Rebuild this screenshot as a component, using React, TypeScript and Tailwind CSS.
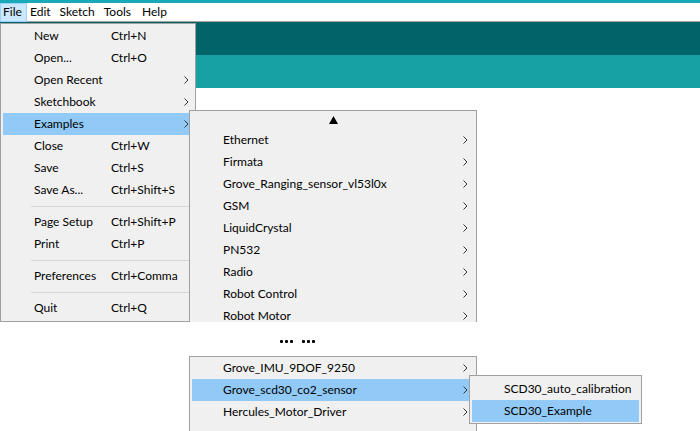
import React from "react";

type Item =
  | { kind: "item"; label: string; shortcut?: string; arrow?: boolean; active?: boolean }
  | { kind: "sep" };

const fileItems: Item[] = [
  { kind: "item", label: "New", shortcut: "Ctrl+N" },
  { kind: "item", label: "Open...", shortcut: "Ctrl+O" },
  { kind: "item", label: "Open Recent", arrow: true },
  { kind: "item", label: "Sketchbook", arrow: true },
  { kind: "item", label: "Examples", arrow: true, active: true },
  { kind: "item", label: "Close", shortcut: "Ctrl+W" },
  { kind: "item", label: "Save", shortcut: "Ctrl+S" },
  { kind: "item", label: "Save As...", shortcut: "Ctrl+Shift+S" },
  { kind: "sep" },
  { kind: "item", label: "Page Setup", shortcut: "Ctrl+Shift+P" },
  { kind: "item", label: "Print", shortcut: "Ctrl+P" },
  { kind: "sep" },
  { kind: "item", label: "Preferences", shortcut: "Ctrl+Comma" },
  { kind: "sep" },
  { kind: "item", label: "Quit", shortcut: "Ctrl+Q" },
];

const examples = [
  "Ethernet",
  "Firmata",
  "Grove_Ranging_sensor_vl53l0x",
  "GSM",
  "LiquidCrystal",
  "PN532",
  "Radio",
  "Robot Control",
  "Robot Motor",
];

const groveItems = [
  { label: "Grove_IMU_9DOF_9250", active: false },
  { label: "Grove_scd30_co2_sensor", active: true },
  { label: "Hercules_Motor_Driver", active: false },
];

function Chevron() {
  return (
    <svg width="5" height="8" viewBox="0 0 5 8" className="shrink-0">
      <path d="M0.5 0.5 L4 4 L0.5 7.5" fill="none" stroke="#333" strokeWidth="1" />
    </svg>
  );
}

function MenuRow({
  label,
  shortcut,
  arrow,
  active,
}: {
  label: string;
  shortcut?: string;
  arrow?: boolean;
  active?: boolean;
}) {
  return (
    <div className={`relative flex h-[22px] items-center pl-[31px] ${active ? "bg-[#91c9f7]" : ""}`}>
      <span className="w-[77px] shrink-0 whitespace-nowrap">{label}</span>
      {shortcut && <span className="whitespace-nowrap">{shortcut}</span>}
      {arrow && (
        <span className="absolute right-[4px] top-[7px]">
          <Chevron />
        </span>
      )}
    </div>
  );
}

function SubRow({ label, active, arrow = true }: { label: string; active?: boolean; arrow?: boolean }) {
  return (
    <div className={`relative mx-[2px] flex h-[22px] items-center pl-[31px] ${active ? "bg-[#91c9f7]" : ""}`}>
      <span className="whitespace-nowrap">{label}</span>
      {arrow && (
        <span className="absolute right-[6px] top-[7px]">
          <Chevron />
        </span>
      )}
    </div>
  );
}

function Dots() {
  return (
    <div className="flex gap-[2px]">
      <div className="size-[3px] rounded-[1px] bg-black" />
      <div className="size-[3px] rounded-[1px] bg-black" />
      <div className="size-[3px] rounded-[1px] bg-black" />
    </div>
  );
}

export default function App() {
  return (
    <div className="relative h-[431px] w-[700px] overflow-hidden bg-white font-['Lato',sans-serif] text-[12px] leading-none text-black">
      {/* window chrome */}
      <div className="h-[3px] bg-[#1aa9b8]" />
      <div className="flex h-[19px] items-center border-b border-[#a3a3a3] bg-white">
        <div className="flex h-[19px] w-[27px] items-center border border-[#99d1ff] bg-[#cce8ff] pl-[2px]">File</div>
        <span className="ml-[3px]">Edit</span>
        <span className="ml-[9px]">Sketch</span>
        <span className="ml-[9px]">Tools</span>
        <span className="ml-[11px]">Help</span>
      </div>
      <div className="h-[33px] bg-[#006468]" />
      <div className="h-[33px] bg-[#17a1a5]" />

      {/* File menu */}
      <div className="absolute left-0 top-[23px] h-[299px] w-[196px] border border-[#a0a0a0] bg-[#f0f0f0] px-[2px] pt-[1px]">
        {fileItems.map((it, i) =>
          it.kind === "sep" ? (
            <div key={i} className="flex h-[10px] items-center pl-[28px]">
              <div className="h-px w-full bg-[#d7d7d7]" />
            </div>
          ) : (
            <MenuRow key={i} label={it.label} shortcut={it.shortcut} arrow={it.arrow} active={it.active} />
          )
        )}
      </div>

      {/* Examples submenu (top part) */}
      <div className="absolute left-[189px] top-[110px] h-[212px] w-[288px] overflow-hidden border-x border-t border-[#a0a0a0] bg-[#f0f0f0]">
        <div className="flex h-[18px] items-center justify-center">
          <svg width="9" height="8" viewBox="0 0 9 8">
            <path d="M4.5 0 L9 8 L0 8 Z" fill="#000" />
          </svg>
        </div>
        {examples.map((e) => (
          <SubRow key={e} label={e} />
        ))}
      </div>

      {/* ellipsis */}
      <div className="absolute left-[280px] top-[340px] flex gap-[9px]">
        <Dots />
        <Dots />
      </div>

      {/* Examples submenu (lower part) */}
      <div className="absolute left-[189px] top-[356px] h-[90px] w-[288px] border-x border-t border-[#a0a0a0] bg-[#f0f0f0]">
        {groveItems.map((g) => (
          <SubRow key={g.label} label={g.label} active={g.active} />
        ))}
      </div>

      {/* SCD30 submenu */}
      <div className="absolute left-[469px] top-[375px] h-[49px] w-[173px] border border-[#a0a0a0] bg-[#f0f0f0] px-[2px] pt-[2px]">
        <div className="flex h-[22px] items-center pl-[32px]">SCD30_auto_calibration</div>
        <div className="flex h-[22px] items-center bg-[#91c9f7] pl-[32px]">SCD30_Example</div>
      </div>
    </div>
  );
}
